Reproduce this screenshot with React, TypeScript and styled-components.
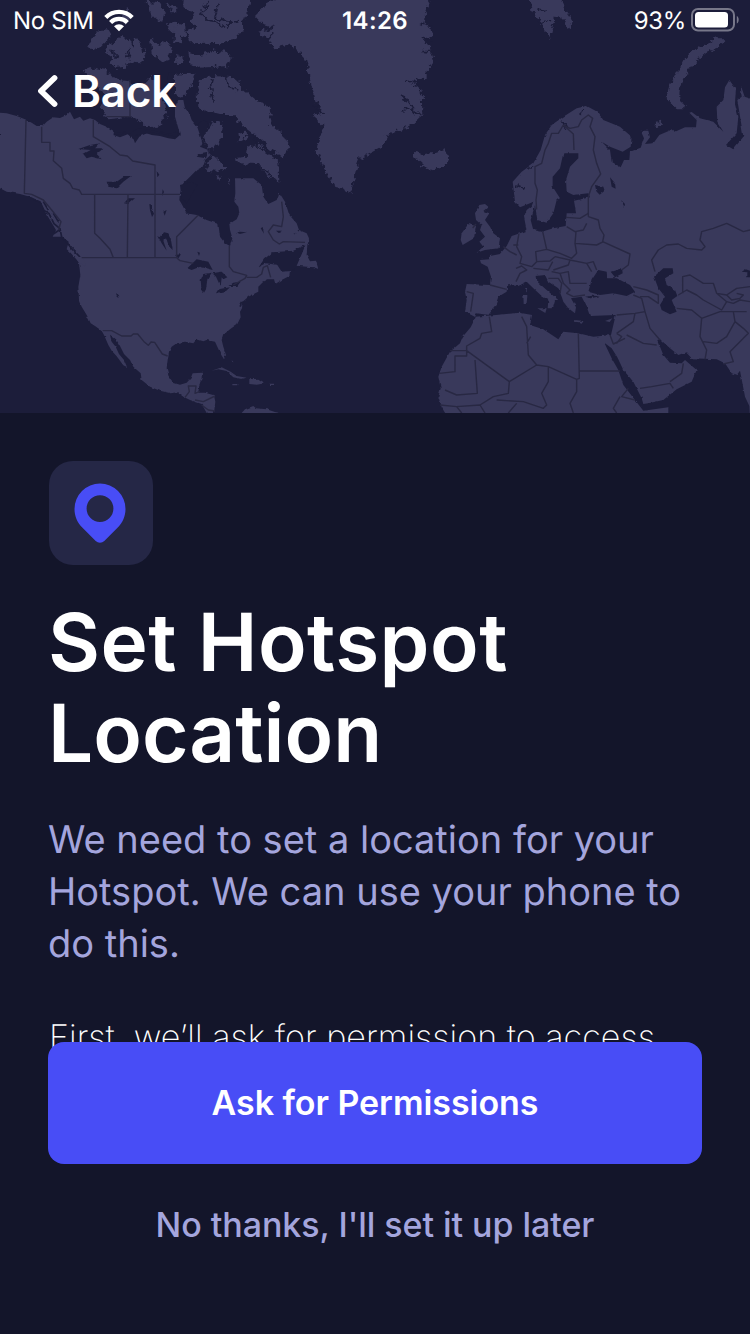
import React from 'react';
import styled, { createGlobalStyle } from 'styled-components';

const GlobalStyle = createGlobalStyle`
  * { box-sizing: border-box; }
  body {
    margin: 0;
    background: #13152a;
    font-family: Inter, "Liberation Sans", sans-serif;
    font-optical-sizing: none;
    text-rendering: geometricPrecision;
  }
`;

const Screen = styled.main`
  display: flex;
  flex-direction: column;
  width: 750px;
  height: 1334px;
  overflow: hidden;
  background: #13152a;
`;

const Hero = styled.header`
  position: relative;
  flex: none;
  height: 413px;
  overflow: hidden;
  background: #1c1d3a;
  color: #fff;
`;

const MapCanvas = styled.svg`
  position: absolute;
  inset: 0;
  width: 750px;
  height: 413px;
`;

const StatusBar = styled.div`
  position: relative;
  display: grid;
  grid-template-columns: 1fr auto 1fr;
  align-items: center;
  height: 40px;
  padding: 0 11px 0 13px;
  font-size: 24px;
`;

const StatusGroup = styled.div<{ $end?: boolean }>`
  display: flex;
  align-items: center;
  justify-content: ${(p) => (p.$end ? 'flex-end' : 'flex-start')};
  gap: ${(p) => (p.$end ? 5 : 10)}px;
  letter-spacing: -0.35px;
`;

const Clock = styled.time`
  padding-right: 2px;
  font-weight: 600;
  letter-spacing: 0.4px;
`;

const BackButton = styled.button`
  position: relative;
  display: flex;
  align-items: center;
  gap: 14px;
  margin: 24px 0 0 37px;
  padding: 0;
  border: 0;
  background: none;
  color: #fff;
  font: 600 44px/54px Inter, sans-serif;
  letter-spacing: -0.2px;
`;

const Content = styled.section`
  flex: none;
  height: 629px;
  padding: 48px 48px 0;
`;

const IconTile = styled.div`
  display: flex;
  align-items: center;
  justify-content: center;
  width: 104px;
  height: 104px;
  margin-left: 1px;
  padding-right: 2px;
  border-radius: 24px;
  background: #252746;
`;

const Title = styled.h1`
  margin: 32px 0 0;
  color: #fff;
  font-size: 80px;
  font-weight: 600;
  line-height: 91px;

  &::first-line {
    letter-spacing: 0.5px;
  }
`;

const Lead = styled.p`
  margin: 35px -20px 0 0;
  color: #a4a5dd;
  font-size: 38px;
  line-height: 52px;
`;

const Note = styled.p`
  margin: 42px 0 0 1px;
  color: #fff;
  font-size: 34px;
  font-weight: 200;
  line-height: 52px;
  letter-spacing: 0.04px;
  white-space: nowrap;
`;

const Actions = styled.footer`
  position: relative;
  display: flex;
  flex-direction: column;
  gap: 32px;
  padding: 0 48px;
`;

const Action = styled.button<{ $primary?: boolean }>`
  height: ${(p) => (p.$primary ? 122 : 58)}px;
  padding: 0 0 1px;
  border: 0;
  border-radius: 16px;
  background: ${(p) => (p.$primary ? '#484df6' : 'transparent')};
  color: ${(p) => (p.$primary ? '#fff' : '#a4a5dd')};
  font: ${(p) => (p.$primary ? 600 : 500)} 34px Inter, sans-serif;
  letter-spacing: -0.05px;
`;

const americas = [
  'M0 338L20 340 50 348 75 358 95 368 110 378 128 378 140 365 160 352 180 354 200 345 210 335 222 358 240 350 250 362 270 355 285 360 300 372 320 380 345 395 340 405 360 412 385 402 400 415 405 430 418 410 440 400 455 405 480 408 505 415 525 418 540 405 535 385 525 350 525 320 535 300 550 300 555 325 568 340 575 360 590 378 600 390 612 420 600 440 625 450 632 465 615 480 608 500 590 510 570 530 550 550 540 580 538 600 545 612 560 640 590 645 620 660 655 672 660 710 675 730 690 738 697 715 690 690 688 672 710 658 718 640 715 620 703 605 706 580 705 535 760 535 785 555 790 590 805 612 830 600 838 578 855 605 868 645 890 670 897 690 920 700 927 715 922 735 920 765 930 784 948 782 955 807 942 802 920 800 890 797 870 812 868 828 845 840 826 852 822 838 805 838 790 845 775 860 775 875 745 890 728 905 726 925 720 935 722 952 712 972 690 988 670 1005 665 1020 670 1040 678 1065 672 1078 662 1062 654 1045 645 1025 620 1020 610 1024 590 1018 580 1030 555 1025 530 1030 515 1040 507 1055 503 1080 500 1105 507 1130 520 1148 540 1154 560 1148 572 1135 578 1120 606 1118 605 1135 598 1155 595 1178 615 1178 642 1186 646 1205 642 1239 620 1239 605 1212 570 1200 550 1190 532 1177 512 1180 480 1172 450 1160 425 1140 422 1120 400 1100 390 1080 372 1062 360 1038 348 1018 330 1004 335 1025 347 1040 357 1062 372 1080 381 1101 370 1096 350 1069 335 1052 325 1035 312 1005 305 992 285 978 272 970 260 945 245 920 237 900 235 860 241 825 237 790 222 765 200 748 206 725 186 710 158 710 168 690 150 660 135 635 120 605 95 592 60 582 20 575 0 565Z',
  'M725 1239L735 1228 760 1218 768 1225 800 1228 825 1236 840 1239Z',
  'M635 1112L665 1102 692 1115 710 1128 740 1133 725 1137 700 1132 680 1113 655 1108Z M748 1138L775 1136 796 1150 770 1154 748 1152Z M697 1152h18v4h-18Z M808 1151h14v4h-14Z M695 1080l5 6-2 4Z',
  'M200 745L225 757 252 778 258 800 240 790 222 770Z',
];
const arctic = [
  'M265 140L280 110 300 90 325 88 335 105 315 125 300 140 280 150Z',
  'M315 155L325 135 345 125 365 110 390 125 395 145 405 113 430 145 435 175 415 190 385 185 375 200 350 203 330 185 340 175Z',
  'M248 210L280 203 320 210 340 235 380 240 400 260 430 255 450 230 475 250 490 300 500 345 470 385 440 375 390 350 320 358 300 320 320 290 290 260 262 235Z',
  'M440 5L480 10 495 40 490 65 470 60 450 40Z M380 20L395 50 370 80 365 50Z M505 65L555 72 558 105 530 108 505 85Z M500 10L530 20 520 40Z',
  'M552 -15L755 -15 742 40 725 65 730 85 708 115 690 125 660 130 620 128 570 130 560 95 590 82 570 60 580 40 550 18Z',
  'M565 160L600 165 640 152 680 155 695 175 685 198 600 203 572 195Z',
  'M450 115L478 135 500 122 515 150 505 180 485 185 455 160Z M530 165L550 170 552 192 528 192Z M525 80L550 130 520 125Z',
  'M525 225L585 218 572 260 545 292 525 285Z',
  'M590 280L600 240 640 228 700 232 722 250 728 268 765 300 790 305 815 340 810 370 850 405 868 440 850 475 810 445 760 400 720 370 700 345 660 345 620 335 592 320Z',
  'M745 440L780 430 800 455 835 485 838 545 800 525 770 492 710 490 705 475 740 470Z',
  'M640 360L670 370 665 410 645 445 620 445 612 410Z M635 465L660 488 682 505 650 515 615 512Z M715 400L735 395 740 415 720 425Z M648 528l15 3-5 12Z M685 535l8 6-4 12Z',
  'M762 45L785 20 810 8 840 -15 1285 -15 1288 10 1275 40 1272 65 1295 85 1300 110 1270 118 1292 145 1303 178 1280 210 1280 238 1245 235 1265 270 1267 345 1230 378 1190 395 1160 405 1145 440 1110 460 1080 475 1067 510 1062 550 1045 585 1030 565 1005 560 985 525 965 490 950 455 957 410 975 385 938 350 965 330 945 300 935 260 925 215 915 175 890 145 865 133 820 145 805 115 775 98 825 82 785 70Z',
  'M1245 452L1265 465 1280 458 1310 455 1335 445 1348 475 1330 500 1300 512 1262 498 1265 485 1243 470Z',
  'M1590 -15L1685 -15 1695 30 1720 65 1705 90 1690 60 1665 50 1655 90 1650 118 1635 95 1620 65 1597 30Z',
  'M2155 105L2170 120 2160 140 2120 155 2090 180 2060 220 2040 265 2038 290 2058 325 2030 325 2000 295 2010 260 2030 220 2050 180 2080 150 2120 135Z',
  'M1968 366l12 -4 6 10-10 12-10-6Z',
];
const eurasia =
  'M1538 545L1565 515 1600 490 1622 450 1635 405 1655 375 1690 350 1730 325 1760 318 1792 335 1810 360 1860 380 1895 410 1892 440 1868 455 1830 440 1805 425 1830 450 1835 485 1862 502 1872 480 1888 480 1890 455 1922 443 1932 415 1922 392 1945 392 1950 412 1935 432 1960 430 1978 405 2018 388 2025 395 2055 382 2088 382 2090 360 2068 338 2075 336 2100 355 2140 365 2170 395 2152 365 2150 320 2170 300 2175 262 2188 240 2208 268 2205 310 2215 350 2210 400 2178 435 2200 448 2230 410 2212 300 2225 290 2222 255 2234 290 2265 300 2265 1255 1345 1255 1325 1222 1315 1190 1322 1165 1315 1130 1325 1100 1350 1055 1380 1030 1388 1010 1412 982 1427 952 1395 935 1400 900 1395 875 1400 852 1470 855 1473 830 1463 800 1443 790 1440 780 1468 778 1470 768 1500 762 1520 738 1535 708 1560 700 1580 692 1572 650 1580 630 1595 618 1600 605 1590 610 1560 622 1545 605Z';
const isles = [
  'M1438 615L1455 612 1465 620 1450 633 1468 640 1455 660 1470 680 1480 700 1500 715 1496 745 1455 750 1430 758 1450 740 1438 725 1455 710 1440 690 1445 675 1428 660 1425 640Z',
  'M1385 700L1405 672 1428 678 1422 715 1388 735 1382 720Z',
];
const seas = [
  'M1690 460L1735 460 1735 475 1710 500 1698 540 1700 575 1720 585 1765 580 1770 592 1722 602 1728 640 1700 640 1697 678 1660 685 1625 695 1600 690 1592 660 1605 615 1612 660 1640 668 1660 640 1670 600 1680 595 1658 560 1658 530 1680 505Z',
  'M1425 950L1430 940 1465 945 1485 920 1495 890 1520 875 1522 855 1555 858 1580 845 1600 865 1625 888 1645 900 1643 925 1658 925 1665 900 1675 900 1640 870 1612 845 1610 828 1635 825 1645 845 1675 865 1685 890 1690 905 1705 925 1725 940 1728 922 1713 895 1745 890 1760 920 1770 948 1847 945 1833 1005 1780 1010 1735 1000 1690 995 1675 1018 1630 988 1590 975 1596 945 1560 938 1480 946Z',
  'M1765 875L1775 840 1795 810 1820 815 1822 835 1850 835 1890 855 1905 875 1880 888 1840 880 1800 885Z M1832 815L1866 805 1868 820 1845 832Z M1755 890l25-3 20 2-28 6Z',
  'M1962 830L1990 805 2018 805 2020 820 1995 835 2000 855 2025 870 2032 888 2015 900 2030 935 2010 943 1985 930 1980 915 1995 890 1975 865Z',
  'M1813 1028L1835 1045 1852 1072 1870 1110 1900 1145 1925 1195 1930 1212 1945 1210 1990 1200 2030 1168 2075 1145 2090 1110 2055 1080 2045 1090 2010 1088 1990 1065 1972 1020 1980 1018 2010 1045 2035 1065 2058 1057 2075 1075 2150 1078 2175 1090 2195 1120 2210 1125 2220 1112 2235 1190 2248 1218 2250 1255 2005 1255 2005 1222 1930 1232 1905 1200 1870 1155 1855 1110 1835 1075Z',
  'M1785 555l25 5 4 12-15 12-10-10Z M1830 532l15 18 2 16-12-6Z M1863 600l12 12-2 8Z M2225 815l12-7 13 4v20h-8v-15Z',
];
const lakes = [
  'M235 447L270 435 300 430 285 445 310 445 290 462 305 478 275 470 260 475 250 462 272 450Z',
  'M320 545L350 545 375 528 393 528 370 545 350 565 325 560Z M372 610L385 595 405 595 385 612Z M470 512l8 12-6 8Z M488 568l4 8-6 12Z M448 612l8 2v15l6 12-6 10-6-20Z M490 635l10-5-6 17Z',
  'M472 705L482 712 492 697 505 700 512 715 518 750 508 740 498 715 490 722 500 752 485 730Z M525 765l18-2-8 12Z M592 755l8 3-3 10Z M350 878l8 10-2 5-7-8Z',
  'M562 805L590 778 625 785 638 810 600 800 575 810Z',
  'M605 875L602 840 610 822 635 818 622 838 618 868 612 878Z M637 820L665 815 682 832 670 838 665 832 662 860 648 830Z M648 880L655 868 690 862 678 873Z M685 858L700 848 722 845 712 858Z',
  'M776 802L792 778 818 757 880 752 916 736 904 765 890 797 882 812 845 815 832 795 800 790Z',
  'M540 555L575 545 592 555 560 610 545 595Z M600 460L625 455 618 475 590 470Z M340 395L390 400 415 385 450 390 500 400 535 398 530 410 480 400 455 398 410 405 400 418 380 400 345 405Z',
  'M708 697l12-2 20 2-20 5Z M782 685l6-4 4 20Z M828 692l18 0-10 7Z M880 702l15-7-10 8Z',
  'M590 375L610 360 630 370 620 400 608 430Z M505 220L525 215 520 260 510 290 500 260Z',
];
const fjords =
  'M600 35l20 25 30 5 25 20 M625 0l-15 40 M655 10l-10 45 50 10 M680 90l10-20 25-8 M640 235l-8 30 8 40 M680 232l5 30 30 8 M800 115l20-15 M1200 290l20 10 30 40 15 0 M1210 330l30-5 M1215 240l45 15 M1262 110l30 10 M1270 155l25 0 M1260 70l35 10 M760 400l15 40 30 20 M770 490l35 30 25 20 M945 320l25 25 M1620 70l30-12 M1640 35l-25-5 M1545 555l25 10 M1685 365l15 20 M1740 345l8-20 M1600 500l-20 8 M330 150l20 20 M390 150l-8 25';
const inlets = 'M100 598l20 8 12 25 15 10 15 30 18 15 5 25 15 15 15 20 25 25 M130 605l15 25 M160 640l15 25 M178 690l-18 12 M720 920l8-15';
const borders = [
  'M78 360L73 580 95 583 130 600 155 630 183 665 175 690 M125 380V427H150V453H162L160 482 185 505 190 535 210 550 218 565 238 570 245 583H540 M280 360V410L330 440 360 465 382 468 398 483 465 495V773 M384 583L382 773 M284 583V700L300 715 330 748 340 773 M245 773H530L540 782 580 790 M530 773V710L595 645 M688 738V800L700 815 740 826 735 835 700 855 M740 832H770L785 822 790 802 802 797 812 832 M390 240V350H320',
  'M845 605L850 650 845 680 820 675 805 695 820 720 838 732 850 725 915 727',
  'M308 992L335 992 365 1008 393 1008 400 1002 413 1002 432 1025 445 1036 453 1026 464 1027 487 1062 503 1068 M555 1192L568 1175 565 1158 588 1158 585 1180 598 1175 M585 1200L610 1205 645 1188 M605 1215l20 15 20 3',
  'M1610 628L1608 600 1612 570 1605 550V500L1625 490 1635 450 1645 430 1655 400 1675 400 1690 375 1720 402 1722 450 M1690 375L1710 385 1735 380 1745 360 1765 345 1778 355 1770 380 1785 410 1780 450 1790 490 1802 522 1775 560 1765 590 1765 650',
  'M1765 650L1795 660 1800 685 1812 705 1808 725 1890 762 1885 795 1865 810 M1698 652L1740 655 1765 640 M1700 680L1725 695 1750 690 1760 670 M1728 695L1725 730 1790 735 1810 725 M1725 730L1730 760 1715 775 1680 760 1640 748 1628 695 M1557 700L1550 740 1565 770 1560 790 1595 800 1610 785 1607 755 1640 748 M1510 740L1530 755 1550 765 M1540 735h15 M1610 785L1650 783 1665 770 M1658 785L1645 810 1600 805 M1548 805L1565 798 1580 810 1560 820 1548 845 M1665 770L1710 780 1705 795 1660 810 M1710 780L1760 790 1775 815 M1655 815L1680 820 1705 815 1710 850 1760 850 M1645 835L1675 835 1685 850 1680 880 M1680 820L1690 850 1710 870 1700 880 1720 890 1755 885 M1760 790l20-5 10 25 M1470 855L1520 868 M1400 875L1420 880 1412 935',
  'M1400 1052L1400 1038 1440 1015 1445 1000 1475 995 1468 950 M1350 1052H1400V1068H1365V1115L1318 1120 M1400 1052L1528 1145 1610 1095 1585 1065 1580 980 1565 950 M1425 1080L1432 1180 1370 1185 1335 1170 M1528 1145L1525 1180 1480 1190 1440 1215 1370 1220 M1610 1095L1645 1100 1730 1138V1175L1710 1210 1720 1239 M1735 1000L1738 1135 1730 1138 M1738 1113H1860 M1645 1100L1645 1145 1625 1180 1640 1215 1630 1225 1570 1205 1490 1200 M1580 1030l12-20 M1320 1215l50 5 15 19 M1440 1215l15 24 M1860 1190l-20 35 10 14 M1885 1165l-20 25 40 10 M1550 1210l-25 29',
  'M1850 945L1905 940 1935 935 1925 895 1900 885 M1905 940L1900 965 1850 1000 M1935 935L1950 985 1980 1020 M1880 1005L1930 1030 1970 1035 M1850 1000L1865 1010 1850 1030 M1875 1015L1840 1032 1830 1005 M1920 1165L1955 1160 2010 1150 2020 1165 M2010 1145L2045 1120 2050 1090 M2030 925L2075 930 2105 955 2100 1010 2120 1050 2115 1078 M2105 955L2160 935 2200 935 2205 965 2180 1010 2150 1030 2110 1025 M2200 935l40 0 M2205 965L2230 985 2245 1000 2190 1055 2200 1085 2170 1092',
  'M1965 815L1955 780 1975 750 2000 735 2035 732 2060 745 2105 750 2115 740 2100 720 2105 695 2140 685 2180 670 2200 680 2230 695 2250 690 M2048 880V830L2070 825 2110 850 2140 850 2150 880 2180 885 2210 865 2250 860 M2035 885L2060 870 2090 885 2110 900 2165 930 2180 905 2150 880 M1900 860L1940 870 1975 885 1975 910 1945 890 1920 890 M2180 905l20 5 20-10 30 5 M2180 885l15 15 25-5 10-10-20-5',
  'M1428 672l-10 12',
];

function WorldMap() {
  return (
    <MapCanvas viewBox="0 0 2250 1239" preserveAspectRatio="none" aria-hidden>
      <defs>
        <filter id="coast" x="-20" y="-20" width="2290" height="1280" filterUnits="userSpaceOnUse" colorInterpolationFilters="sRGB">
          <feTurbulence type="fractalNoise" baseFrequency="0.06" numOctaves={2} seed={4} />
          <feDisplacementMap in="SourceGraphic" scale={8} xChannelSelector="R" yChannelSelector="G" />
          <feGaussianBlur stdDeviation={1.2} />
        </filter>
        <filter id="fjord" x="-20" y="-20" width="2290" height="1280" filterUnits="userSpaceOnUse" colorInterpolationFilters="sRGB">
          <feTurbulence type="fractalNoise" baseFrequency="0.06" numOctaves={3} seed={9} />
          <feDisplacementMap in="SourceGraphic" scale={24} xChannelSelector="R" yChannelSelector="G" />
          <feGaussianBlur stdDeviation={1.2} />
        </filter>
      </defs>
      <g filter="url(#coast)">
        <g fill="#39395b">
          {americas.map((d) => <path key={d} d={d} />)}
          <path d={eurasia} />
          {isles.map((d) => <path key={d} d={d} />)}
        </g>
        <g fill="#1c1d3a">
          {seas.map((d) => <path key={d} d={d} />)}
          {lakes.map((d) => <path key={d} d={d} />)}
        </g>
        <path d={inlets} fill="none" stroke="#1c1d3a" strokeWidth={5} />
        <path fill="#39395b" d="M1570 885h12l-2 27h-9Z M1576 864l5 0 0 14-5-2Z M1612 925l28 0-4 14Z M1725 960l25 3-2 5-23-3Z M1815 963l22-8-8 11Z" />
      </g>
      <g filter="url(#fjord)">
        <g fill="#39395b">{arctic.map((d) => <path key={d} d={d} />)}</g>
        <path d={fjords} fill="none" stroke="#1c1d3a" strokeWidth={5} />
      </g>
      <g fill="none" stroke="#282843" strokeWidth={4.2} strokeLinejoin="round">
        {borders.map((d) => <path key={d} d={d} />)}
      </g>
    </MapCanvas>
  );
}

const WifiIcon = () => (
  <svg width="30" height="23" viewBox="0 0 30 23" aria-hidden>
    <g fill="none" stroke="#fff" strokeWidth="4.300">
      <path d="M1.8 8.400a18.600 18.600 0 0 1 26.400 0" />
      <path d="M6.600 13.400a11.900 11.900 0 0 1 16.800 0" />
    </g>
    <path d="M10 17.200a7.200 7.200 0 0 1 10 0L15 22.300z" fill="#fff" />
  </svg>
);

const BatteryIcon = () => (
  <svg width="48" height="24" viewBox="0 0 48 24" aria-hidden>
    <rect x="1" y="1" width="42" height="21.5" rx="6" fill="none" stroke="#777789" strokeWidth="2" />
    <rect x="4" y="4" width="33" height="15.5" rx="3.5" fill="#fff" />
    <path d="M45.800 8c2.500 1 2.500 6.500 0 7.500z" fill="#777789" />
  </svg>
);

const ChevronIcon = () => (
  <svg width="21" height="34" viewBox="0 0 21 34" aria-hidden>
    <path d="M17.500 4 4 17l13.500 13" fill="none" stroke="#fff" strokeWidth="5.800" strokeLinecap="round" strokeLinejoin="round" />
  </svg>
);

const PinIcon = () => (
  <svg width="52" height="60" viewBox="0 0 52 60" aria-hidden>
    <path
      fill="#484df6"
      fillRule="evenodd"
      d="M26 .5A25.500 25.500 0 0 0 .5 26c0 7.500 3 13.600 7.500 18.200L21.700 58a6 6 0 0 0 8.600 0L44 44.200c4.500-4.600 7.500-10.700 7.500-18.200A25.500 25.500 0 0 0 26 .5zm0 11.700a13.400 13.400 0 1 1 0 26.800 13.400 13.400 0 0 1 0-26.800z"
    />
  </svg>
);

export default function App() {
  return (
    <>
      <GlobalStyle />
      <Screen>
        <Hero>
          <WorldMap />
          <StatusBar>
            <StatusGroup>No SIM<WifiIcon /></StatusGroup>
            <Clock>14:26</Clock>
            <StatusGroup $end>93%<BatteryIcon /></StatusGroup>
          </StatusBar>
          <BackButton><ChevronIcon />Back</BackButton>
        </Hero>
        <Content>
          <IconTile><PinIcon /></IconTile>
          <Title>Set Hotspot<br />Location</Title>
          <Lead>We need to set a location for your<br />Hotspot. We can use your phone to<br />do this.</Lead>
          <Note>First, we’ll ask for permission to access</Note>
        </Content>
        <Actions>
          <Action $primary>Ask for Permissions</Action>
          <Action>No thanks, I'll set it up later</Action>
        </Actions>
      </Screen>
    </>
  );
}
